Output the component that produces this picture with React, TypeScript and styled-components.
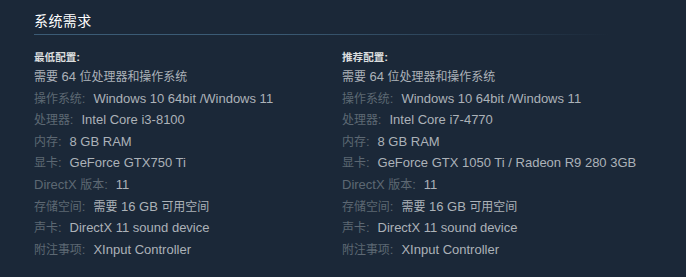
import styled, { createGlobalStyle } from 'styled-components';

const GlobalStyle = createGlobalStyle`
  body {
    margin: 0;
    background: #1b2838;
    font-family: "Liberation Sans", Arial, "Noto Sans CJK SC", sans-serif;
  }
`;

const StyledPage = styled.div`
  width: 686px;
  height: 277px;
  padding: 13px 0 0 34px;
  box-sizing: border-box;
  background: #1b2838;
`;

const StyledTitle = styled.h2`
  margin: 0;
  width: 576px;
  padding-bottom: 5px;
  font-size: 14px;
  font-weight: 400;
  line-height: 17px;
  letter-spacing: 0.03em;
  color: #ffffff;
  background-image: linear-gradient(
    to right,
    #3b5b75 0%,
    #3b5b75 40%,
    rgba(59, 91, 117, 0.4) 80%,
    rgba(59, 91, 117, 0) 100%
  );
  background-repeat: no-repeat;
  background-size: 100% 1px;
  background-position: left bottom;
`;

const StyledColumns = styled.div`
  display: flex;
  margin-top: 12px;
`;

const StyledColumn = styled.div`
  width: 308px;
  flex-shrink: 0;
`;

const StyledHeading = styled.div`
  height: 17px;
  font-size: 11.5px;
  font-weight: 700;
  line-height: 17px;
  color: #dcdedf;
  margin: 2px 0 0;
`;

const StyledList = styled.ul`
  list-style: none;
  margin: 0;
  padding: 0;
`;

const StyledItem = styled.li`
  height: 21.6px;
  font-size: 13px;
  line-height: 21.6px;
  color: #acb2b8;
  white-space: nowrap;
`;

const StyledLabel = styled.span`
  color: #5d6873;
  margin-right: 8px;
`;

// 한자 글자는 원본에서 살짝 좁게 보여서 따로 줄여줌
const StyledCjk = styled.span`
  font-size: 0.92em;
  line-height: 1;
`;

const cjkPattern = /([\u3000-\u303f\u4e00-\u9fff\uff00-\uffef]+)/;

function MixedText({ text }: { text: string }) {
  const parts = text.split(cjkPattern).filter(Boolean);
  return (
    <>
      {parts.map((part, index) =>
        cjkPattern.test(part) ? <StyledCjk key={index}>{part}</StyledCjk> : part
      )}
    </>
  );
}

type Spec = {
  label?: string;
  value: string;
};

type Requirement = {
  title: string;
  specs: Spec[];
};

const requirements: Requirement[] = [
  {
    title: '最低配置:',
    specs: [
      { value: '需要 64 位处理器和操作系统' },
      { label: '操作系统:', value: 'Windows 10 64bit /Windows 11' },
      { label: '处理器:', value: 'Intel Core i3-8100' },
      { label: '内存:', value: '8 GB RAM' },
      { label: '显卡:', value: 'GeForce GTX750 Ti' },
      { label: 'DirectX 版本:', value: '11' },
      { label: '存储空间:', value: '需要 16 GB 可用空间' },
      { label: '声卡:', value: 'DirectX 11 sound device' },
      { label: '附注事项:', value: 'XInput Controller' },
    ],
  },
  {
    title: '推荐配置:',
    specs: [
      { value: '需要 64 位处理器和操作系统' },
      { label: '操作系统:', value: 'Windows 10 64bit /Windows 11' },
      { label: '处理器:', value: 'Intel Core i7-4770' },
      { label: '内存:', value: '8 GB RAM' },
      { label: '显卡:', value: 'GeForce GTX 1050 Ti / Radeon R9 280 3GB' },
      { label: 'DirectX 版本:', value: '11' },
      { label: '存储空间:', value: '需要 16 GB 可用空间' },
      { label: '声卡:', value: 'DirectX 11 sound device' },
      { label: '附注事项:', value: 'XInput Controller' },
    ],
  },
];

export default function App() {
  return (
    <>
      <GlobalStyle />
      <StyledPage>
        <StyledTitle>系统需求</StyledTitle>
        <StyledColumns>
          {requirements.map((req) => (
            <StyledColumn key={req.title}>
              <StyledHeading>
                <MixedText text={req.title} />
              </StyledHeading>
              <StyledList>
                {req.specs.map((spec) => (
                  <StyledItem key={spec.label ?? spec.value}>
                    {spec.label && (
                      <StyledLabel>
                        <MixedText text={spec.label} />
                      </StyledLabel>
                    )}
                    <MixedText text={spec.value} />
                  </StyledItem>
                ))}
              </StyledList>
            </StyledColumn>
          ))}
        </StyledColumns>
      </StyledPage>
    </>
  );
}
